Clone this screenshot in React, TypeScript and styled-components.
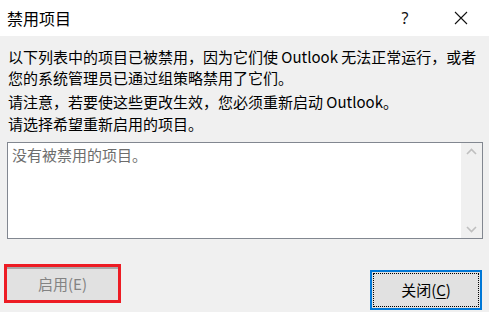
import React from "react";
import styled, { createGlobalStyle } from "styled-components";

const Global = createGlobalStyle`
  html, body { margin: 0; padding: 0; }
  body {
    width: 489px;
    height: 312px;
    overflow: hidden;
    background: #f0f0f0;
    font-family: "Microsoft YaHei UI", "Noto Sans CJK SC", "Noto Sans", sans-serif;
  }
`;

const Dialog = styled.div`
  width: 489px;
  height: 312px;
  display: flex;
  flex-direction: column;
  background: #f0f0f0;
`;

const TitleBar = styled.div`
  height: 36px;
  background: #ffffff;
  display: flex;
  align-items: center;
  padding-left: 7px;
  box-sizing: border-box;
`;

const Title = styled.div`
  flex: 1;
  font-size: 16px;
  color: #000;
  line-height: 20px;
  margin-top: -1px;
`;

const TitleButton = styled.div<{ $w: number }>`
  width: ${(p) => p.$w}px;
  height: 36px;
  display: flex;
  align-items: center;
  justify-content: center;
  font-size: 16px;
  color: #111;
  font-family: "Segoe UI", "Noto Sans", sans-serif;
`;

const Body = styled.div`
  padding: 0 6px 0 7px;
  display: flex;
  flex-direction: column;
`;

const Para = styled.p<{ $top: number }>`
  margin: ${(p) => p.$top}px 0 0 1px;
  font-size: 15px;
  line-height: 21px;
  color: #000;
`;

const ListBox = styled.div`
  margin-top: 8px;
  height: 97px;
  border: 1px solid #828790;
  background: #fff;
  display: flex;
  box-sizing: border-box;
`;

const ListContent = styled.div`
  flex: 1;
  padding: 1px 0 0 4px;
  font-size: 15px;
  line-height: 21px;
  color: #6d6d6d;
`;

const ScrollBar = styled.div`
  width: 21px;
  background: #f0f0f0;
  display: flex;
  flex-direction: column;
  justify-content: space-between;
  align-items: center;
  padding: 5px 0 5px;
`;

const Footer = styled.div`
  margin-top: 25px;
  padding: 0 7px 0 4px;
  display: flex;
  justify-content: space-between;
  align-items: flex-start;
`;

const EnableButton = styled.div`
  width: 117px;
  height: 39px;
  box-sizing: border-box;
  border: 3px solid #ed1c24;
  display: flex;
  flex-direction: column;
`;

const EnableFace = styled.div`
  flex: 1;
  border-top: 2px solid #a8a8a8;
  background: #e1e1e1;
  display: flex;
  align-items: center;
  justify-content: center;
  font-size: 15px;
  color: #838383;
  padding-bottom: 2px;
`;

const CloseButton = styled.div`
  margin-top: 6px;
  width: 112px;
  height: 40px;
  box-sizing: border-box;
  border: 2px solid #0078d7;
  background: #e1e1e1;
  padding: 1px;
  display: flex;
`;

const FocusRect = styled.div`
  flex: 1;
  border: 1px dotted #000;
  display: flex;
  align-items: center;
  justify-content: center;
  font-size: 15px;
  color: #000;
  padding-bottom: 1px;
`;

const Key = styled.span`
  text-decoration: underline;
  text-underline-offset: 2px;
`;

const Chevron = ({ up }: { up?: boolean }) => (
  <svg width="11" height="7" viewBox="0 0 11 7">
    <path
      d={up ? "M1 6 L5.5 1.5 L10 6" : "M1 1 L5.5 5.5 L10 1"}
      fill="none"
      stroke="#bfbfbf"
      strokeWidth="1.6"
    />
  </svg>
);

export default function App() {
  return (
    <>
      <Global />
      <Dialog>
        <TitleBar>
          <Title>禁用项目</Title>
          <TitleButton $w={56}>?</TitleButton>
          <TitleButton $w={56}>
            <svg width="14" height="14" viewBox="0 0 14 14">
              <path d="M1 1 L13 13 M13 1 L1 13" stroke="#111" strokeWidth="1.1" />
            </svg>
          </TitleButton>
        </TitleBar>
        <Body>
          <Para $top={10}>
            以下列表中的项目已被禁用，因为它们使 Outlook 无法正常运行，或者您的系统管理员已通过组策略禁用了它们。
          </Para>
          <Para $top={3}>请注意，若要使这些更改生效，您必须重新启动 Outlook。</Para>
          <Para $top={1}>请选择希望重新启用的项目。</Para>
          <ListBox>
            <ListContent>没有被禁用的项目。</ListContent>
            <ScrollBar>
              <Chevron up />
              <Chevron />
            </ScrollBar>
          </ListBox>
        </Body>
        <Footer>
          <EnableButton>
            <EnableFace>启用(E)</EnableFace>
          </EnableButton>
          <CloseButton>
            <FocusRect>
              关闭(<Key>C</Key>)
            </FocusRect>
          </CloseButton>
        </Footer>
      </Dialog>
    </>
  );
}
